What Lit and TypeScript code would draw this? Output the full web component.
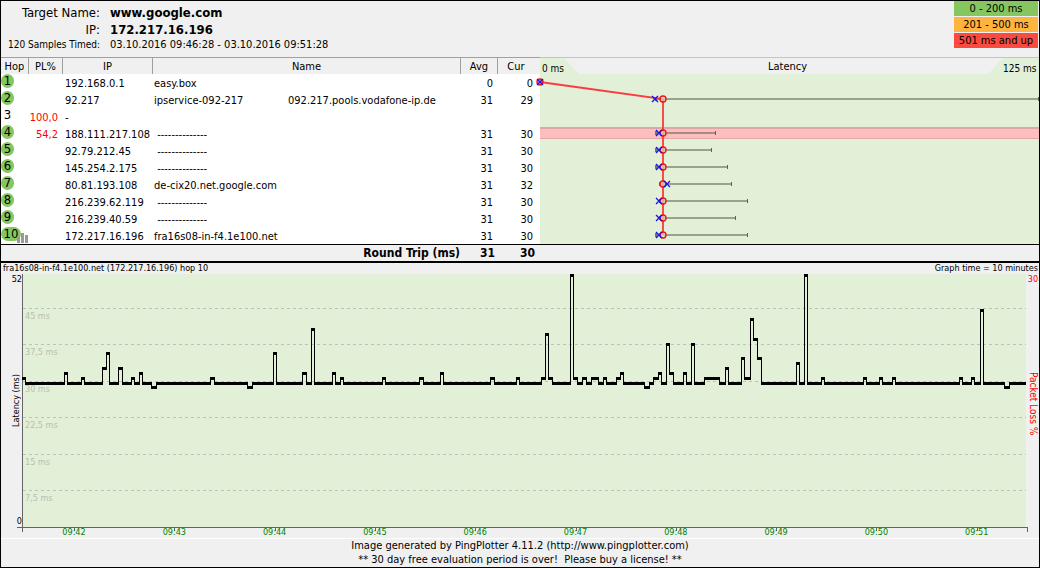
import { LitElement, html, svg, css } from "lit";
import { customElement } from "lit/decorators.js";

interface Hop {
  hop: number;
  loss?: string;
  ip: string;
  name: string[];
  avg?: number;
  cur?: number;
  min?: number;
  max?: number;
}

const NO_NAME = " --------------";

const HOPS: Hop[] = [
  { hop: 1, ip: "192.168.0.1", name: ["easy.box"], avg: 0, cur: 0 },
  { hop: 2, ip: "92.217", name: ["ipservice-092-217", "092.217.pools.vodafone-ip.de"], avg: 31, cur: 29, min: 29, max: 125 },
  { hop: 3, loss: "100,0", ip: "-", name: [] },
  { hop: 4, loss: "54,2", ip: "188.111.217.108", name: [NO_NAME], avg: 31, cur: 30, min: 29, max: 44 },
  { hop: 5, ip: "92.79.212.45", name: [NO_NAME], avg: 31, cur: 30, min: 29, max: 43 },
  { hop: 6, ip: "145.254.2.175", name: [NO_NAME], avg: 31, cur: 30, min: 29, max: 47 },
  { hop: 7, ip: "80.81.193.108", name: ["de-cix20.net.google.com"], avg: 31, cur: 32, min: 30, max: 48 },
  { hop: 8, ip: "216.239.62.119", name: [NO_NAME], avg: 31, cur: 30, min: 30, max: 52 },
  { hop: 9, ip: "216.239.40.59", name: [NO_NAME], avg: 31, cur: 30, min: 30, max: 49 },
  { hop: 10, ip: "172.217.16.196", name: ["fra16s08-in-f4.1e100.net"], avg: 31, cur: 30, min: 29, max: 52 },
];

const ROW = 17;
const PX_PER_MS = 4;

/* Timeline plot: one unit is one pixel at the default window width. */
const PLOT_W = 1005;
const BASE = 108;

/* Departures from the base level: start, end, top of the stroke. */
const PULSES: [number, number, number][] = [
  [0, 4, 103], [42, 46, 98], [59, 63, 103], [80, 84, 93], [84, 88, 78],
  [96, 101, 93], [109, 113, 103], [117, 121, 98], [129, 135, 112],
  [188, 193, 103], [225, 231, 112], [251, 255, 78], [280, 285, 98],
  [289, 293, 54], [310, 314, 98], [318, 322, 103], [360, 364, 103],
  [397, 402, 103], [418, 422, 98], [468, 473, 103], [494, 498, 103],
  [519, 523, 103], [523, 526, 59], [526, 531, 103], [548, 551, 0],
  [551, 556, 103], [560, 565, 103], [569, 577, 103], [581, 585, 103],
  [594, 598, 103], [598, 602, 98], [622, 628, 112], [631, 636, 103],
  [636, 640, 98], [644, 647, 69], [647, 652, 98], [661, 665, 98],
  [669, 673, 69], [682, 698, 103], [703, 707, 93], [719, 722, 83],
  [722, 728, 103], [728, 731, 44], [731, 735, 64], [735, 740, 83],
  [774, 778, 88], [782, 786, 0], [799, 803, 103], [841, 845, 103],
  [857, 861, 103], [870, 874, 103], [937, 941, 103], [949, 953, 103],
  [958, 962, 35], [982, 988, 112],
];

const GRID = [
  { y: 34, label: "45 ms" },
  { y: 70, label: "37,5 ms" },
  { y: 107, label: "30 ms" },
  { y: 143, label: "22,5 ms" },
  { y: 180, label: "15 ms" },
  { y: 216, label: "7,5 ms" },
];

const TIMES = ["09:42", "09:43", "09:44", "09:45", "09:46", "09:47", "09:48", "09:49", "09:50", "09:51"];

function tracePath(): string {
  const steps: [number, number][] = [];
  PULSES.forEach(([start, end, y], i) => {
    steps.push([start, y]);
    const next = PULSES[i + 1];
    if (!next || next[0] > end) steps.push([end - 1, BASE]);
  });
  let d = "";
  steps.forEach(([x, y], i) => {
    const next = steps[i + 1];
    const end = next ? next[0] + 1 : PLOT_W - 1;
    d += `M${x} ${y}H${end}V${y + 3}H${x}Z`;
    if (next) {
      const top = Math.min(y, next[1]);
      const bottom = Math.max(y, next[1]) + 3;
      d += `M${next[0]} ${top}H${next[0] + 1}V${bottom}H${next[0]}Z`;
    }
  });
  return d;
}

@customElement("app-root")
export class AppRoot extends LitElement {
  static styles = css`
    :host {
      display: block;
      box-sizing: border-box;
      border: 1px solid #000;
      background: #f0f0f0;
      color: #000;
      font: 11px/14px "DejaVu Sans Condensed", "DejaVu Sans", sans-serif;
      --plot: #e1f0d6;
    }
    .summary {
      display: flex;
      justify-content: space-between;
      align-items: flex-start;
    }
    .facts {
      display: grid;
      grid-template-columns: 99px auto;
      column-gap: 10px;
      margin: 0;
      padding: 3px 0 5px;
    }
    .facts dt {
      text-align: right;
      white-space: nowrap;
      font-size: 10px;
    }
    .facts dd {
      margin: 0;
    }
    .facts .big {
      font-size: 13px;
      line-height: 17px;
    }
    .facts dd.big {
      font-weight: bold;
    }
    .legend {
      display: grid;
      gap: 1px;
      width: 84px;
      margin: 0 1px 0 0;
      padding: 0;
      list-style: none;
      text-align: center;
      line-height: 15px;
    }
    .good { background: #86c661; }
    .warn { background: #ffb440; }
    .bad { background: #fa4b40; }

    .hops {
      width: 100%;
      table-layout: fixed;
      border-collapse: separate;
      border-spacing: 0;
    }
    .c-hop { width: 27px; }
    .c-pl { width: 34px; }
    .c-ip { width: 90px; }
    .c-name { width: 308px; }
    .c-avg { width: 37px; }
    .c-cur { width: 43px; }
    th, td {
      padding: 0;
      font-weight: normal;
      white-space: nowrap;
    }
    thead th {
      box-sizing: border-box;
      height: 17px;
      padding-top: 2px;
      line-height: 14px;
      border-top: 1px solid #a0a0a0;
    }
    thead th + th {
      border-left: 1px solid #a0a0a0;
    }
    thead th.last {
      padding-right: 6px;
    }
    thead th.scale {
      padding: 0;
      border-left: 0;
      border-top-color: #c4c4c4;
      background: var(--plot);
    }
    .scale-row {
      display: grid;
      grid-template: 16px / 24px 1fr 36px;
      line-height: 22px;
    }
    .scale-row .from,
    .scale-row .to {
      font-size: 10px;
    }
    .scale-row .from { text-align: left; padding-left: 2px; }
    .scale-row .to { text-align: right; padding-right: 3px; }
    .scale-row .title {
      background: #f0f0f0;
      line-height: 17px;
      clip-path: polygon(0 0, 100% 0, calc(100% - 15px) 100%, 15px 100%);
      padding-left: 8px;
    }
    tbody td {
      box-sizing: border-box;
      height: 17px;
      padding-top: 2px;
      line-height: 15px;
      background: #fff;
    }
    tbody td.hop {
      position: relative;
      padding-top: 0;
    }
    .badge {
      display: block;
      box-sizing: border-box;
      width: 13px;
      height: 14px;
      margin-bottom: 3px;
      border-radius: 7px;
      font-size: 13px;
      line-height: 14px;
      text-align: center;
    }
    .badge.wide { width: 20px; }
    .bars {
      position: absolute;
      left: 16px;
      bottom: 1px;
    }
    tbody td.loss {
      color: #f00;
      text-align: right;
      padding-right: 4px;
    }
    .ip { padding-left: 3px; }
    .name { padding-left: 2px; white-space: pre; }
    .part:not(:last-child) {
      display: inline-block;
      width: 134px;
    }
    .num { text-align: right; padding-right: 4px; }
    .num.cur { padding-right: 7px; }
    tbody td.graph {
      height: 170px;
      padding: 0;
      background: var(--plot);
      vertical-align: top;
    }
    .graph svg {
      display: block;
      width: 100%;
      height: 170px;
    }
    tfoot td {
      height: 16px;
      line-height: 16px;
      border-top: 1px solid #000;
      border-bottom: 2px solid #000;
      font-size: 12px;
      font-weight: bold;
      text-align: right;
    }
    tfoot .num { padding-right: 2px; }
    tfoot .num.cur { padding-right: 5px; }

    .timeline {
      font-size: 9px;
      line-height: 11px;
    }
    .caption {
      display: flex;
      justify-content: space-between;
      padding: 0 1px 0 2px;
    }
    .body {
      display: grid;
      grid-template-columns: 21px 1fr 12px;
    }
    .side {
      display: flex;
      flex-direction: column;
      justify-content: space-between;
      align-items: flex-end;
      height: 253px;
    }
    .side .rot {
      writing-mode: vertical-rl;
      line-height: 11px;
    }
    .side .flip { transform: rotate(180deg); }
    .loss-side { color: #f00; align-items: center; }
    .loss-side .rot { font-size: 10px; }
    .loss-side .pad { height: 5px; }
    .plot {
      position: relative;
      height: 264px;
    }
    .plot svg {
      display: block;
      width: 100%;
      height: 258px;
      overflow: visible;
    }
    .level {
      position: absolute;
      left: 3px;
      color: #b9bfb3;
      line-height: 12px;
    }
    .time {
      position: absolute;
      top: 253px;
      transform: translateX(-50%);
      color: #008000;
    }
    .note {
      border-top: 1px solid #fff;
      text-align: center;
    }
    .note p { margin: 0; }
  `;

  private latencyGraph() {
    const cy = (h: Hop) => (h.hop - 1) * ROW + 7;
    const seen = HOPS.filter((h) => h.avg !== undefined);
    const route = seen.map((h) => `${h.avg! * PX_PER_MS - (h.avg ? 1 : 0)},${cy(h) + 1}`).join(" ");
    return html`
      <svg viewBox="0 0 499 170" preserveAspectRatio="none" overflow="visible" role="img" aria-label="Latency per hop">
        <rect x="0" y="53" width="499" height="12" fill="#ffbebe" />
        <rect x="0" y="53" width="499" height="2" fill="#dfa6a6" />
        <rect x="0" y="64" width="499" height="1" fill="#e0a8a8" />
        ${seen
          .filter((h) => h.max)
          .map((h) => {
            const a = h.min! * PX_PER_MS;
            const b = Math.min(h.max! * PX_PER_MS, 499);
            return svg`
              <rect x=${a} y=${cy(h)} width=${b - a} height="2" fill="#5a6455" fill-opacity="0.55" />
              <rect x=${a - 1} y=${cy(h) - 1} width="2" height="4" fill="#6e786a" />
              <rect x=${b - 1} y=${cy(h) - 1} width="1" height="4" fill="#5a6455" />`;
          })}
        <polyline points=${route} fill="none" stroke="#fa3c3c" stroke-width="1.8" />
        ${seen.map((h) => {
          const ax = h.avg! * PX_PER_MS - (h.avg ? 1 : 0);
          const cx = h.cur! * PX_PER_MS - (h.cur ? 1 : 0);
          const y = cy(h) + 1;
          return svg`
            <circle cx=${ax} cy=${y} r="3" fill=${h.avg ? "#e1f0d6" : "#f66"} fill-opacity="0.6" stroke="#f01414" stroke-width="1.4" />
            <path d="M${cx - 3} ${y - 3}l6 6m0-6l-6 6" stroke="#1414f0" stroke-width="1.3" />`;
        })}
      </svg>
    `;
  }

  private hopRow(h: Hop, i: number) {
    return html`
      <tr>
        <td class="hop">
          <span class="badge ${h.avg === undefined ? "" : "good"} ${h.hop > 9 ? "wide" : ""}">${h.hop}</span>
          ${h.hop === 10
            ? html`<svg class="bars" width="11" height="10" aria-hidden="true">
                <path d="M0 4h3v6H0zM4 0h3v10H4zM8 2h3v8H8z" fill="#999" />
              </svg>`
            : ""}
        </td>
        <td class="loss">${h.loss ?? ""}</td>
        <td class="ip">${h.ip}</td>
        <td class="name">${h.name.map((n) => html`<span class="part">${n}</span>`)}</td>
        <td class="num">${h.avg ?? ""}</td>
        <td class="num cur">${h.cur ?? ""}</td>
        ${i === 0 ? html`<td class="graph" rowspan="10">${this.latencyGraph()}</td>` : ""}
      </tr>
    `;
  }

  render() {
    const tick = (i: number) => 52 + i * 100.3;
    return html`
      <header class="summary">
        <dl class="facts">
          <dt class="big">Target Name:</dt>
          <dd class="big">www.google.com</dd>
          <dt class="big">IP:</dt>
          <dd class="big">172.217.16.196</dd>
          <dt>120 Samples Timed:</dt>
          <dd>03.10.2016 09:46:28 - 03.10.2016 09:51:28</dd>
        </dl>
        <ul class="legend">
          <li class="good">0 - 200 ms</li>
          <li class="warn">201 - 500 ms</li>
          <li class="bad">501 ms and up</li>
        </ul>
      </header>

      <table class="hops">
        <colgroup>
          <col class="c-hop" /><col class="c-pl" /><col class="c-ip" /><col class="c-name" />
          <col class="c-avg" /><col class="c-cur" /><col />
        </colgroup>
        <thead>
          <tr>
            <th>Hop</th>
            <th>PL%</th>
            <th>IP</th>
            <th>Name</th>
            <th>Avg</th>
            <th class="last">Cur</th>
            <th class="scale">
              <div class="scale-row">
                <span class="from">0 ms</span>
                <span class="title">Latency</span>
                <span class="to">125 ms</span>
              </div>
            </th>
          </tr>
        </thead>
        <tbody>
          ${HOPS.map((h, i) => this.hopRow(h, i))}
        </tbody>
        <tfoot>
          <tr>
            <td colspan="4">Round Trip (ms)</td>
            <td class="num">31</td>
            <td class="num cur">30</td>
            <td></td>
          </tr>
        </tfoot>
      </table>

      <section class="timeline">
        <div class="caption">
          <span>fra16s08-in-f4.1e100.net (172.217.16.196) hop 10</span>
          <span>Graph time = 10 minutes</span>
        </div>
        <div class="body">
          <div class="side">
            <span>52</span>
            <span class="rot flip">Latency (ms)</span>
            <span>0</span>
          </div>
          <div class="plot">
            <svg viewBox="0 0 1005 258" preserveAspectRatio="none" role="img" aria-label="Latency over time">
              <rect x="0" y="0" width="1004" height="253" fill="#e1f0d6" />
              ${GRID.map(
                (g) => svg`<path d="M1 ${g.y + 0.5}H1004" stroke="#c0c0c0" stroke-dasharray="3 3" />`
              )}
              <path d="M0.5 0V258M-5 253.5H1005M1005.5 253V258" fill="none" stroke="#646464" />
              ${TIMES.map((_, i) => svg`<path d="M${Math.round(tick(i)) + 0.5} 254V257" stroke="#646464" />`)}
              <path d=${tracePath()} shape-rendering="crispEdges" />
            </svg>
            ${GRID.map((g) => html`<span class="level" style="top:${g.y + 2}px">${g.label}</span>`)}
            ${TIMES.map(
              (t, i) => html`<span class="time" style="left:${(tick(i) / PLOT_W) * 100}%">${t}</span>`
            )}
          </div>
          <div class="side loss-side">
            <span>30</span>
            <span class="rot">Packet Loss %</span>
            <span class="pad"></span>
          </div>
        </div>
      </section>

      <footer class="note">
        <p>Image generated by PingPlotter 4.11.2 (http://www.pingplotter.com)</p>
        <p>** 30 day free evaluation period is over!&nbsp; Please buy a license! **</p>
      </footer>
    `;
  }
}
